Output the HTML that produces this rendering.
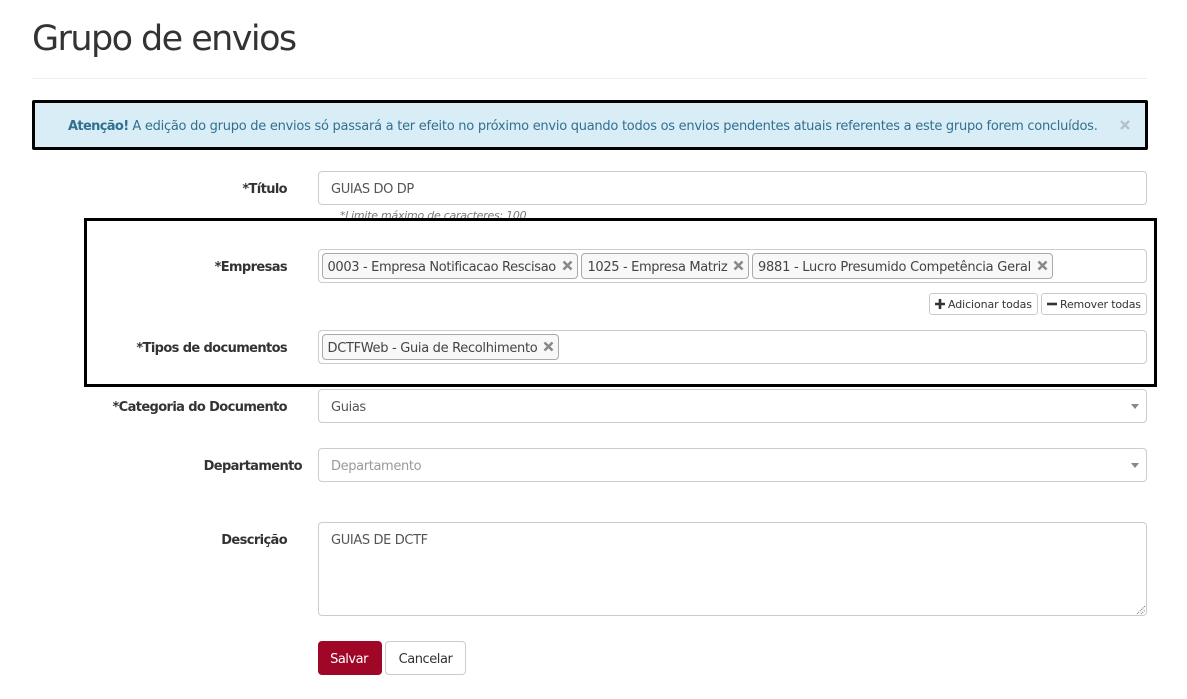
<!DOCTYPE html>
<html lang="pt"><head><meta charset="utf-8"><title>Grupo de envios</title>
<style>
html,body{margin:0;padding:0;background:#fff;width:1187px;height:699px;overflow:hidden}
body{position:relative;font-family:"DejaVu Sans","Liberation Sans",sans-serif;font-size:13px;color:#555}
div,span.a{position:absolute;box-sizing:border-box}
.t{white-space:nowrap;line-height:20px;height:20px}
.box{left:318px;width:829px;height:34px;border:1px solid #ccc;border-radius:4px;background:#fff}
.l{right:900px;font-weight:bold;color:#333;letter-spacing:-.62px;text-align:right}
.v{left:331px;color:#555;letter-spacing:-.37px}
.chip{top:0;height:26px;border:1px solid #aaa;border-radius:4px;background:#f8f8f8}
.c{color:#444;letter-spacing:-.35px}
.btn{height:22px;top:293px;border:1px solid #ccc;border-radius:3px;background:#fff}
.arr{left:1131px;width:0;height:0;border-left:4px solid transparent;border-right:4px solid transparent;border-top:5px solid #888}
svg{position:absolute;display:block}
</style></head><body>
<div class="t" style="left:32px;top:29px;height:20px;line-height:20px;font-size:35px;color:#333;letter-spacing:-1.57px">Grupo de envios</div>
<div style="left:32px;top:78px;width:1115px;height:1px;background:#eee"></div>

<div style="left:32px;top:100px;width:1116px;height:50px;background:#d9edf7;border:3px solid #000;border-radius:2px"></div>
<div class="t" style="left:68px;top:117px;color:#31708f;letter-spacing:-.26px"><b style="letter-spacing:-.65px">Atenção!</b> A edição do grupo de envios só passará a ter efeito no próximo envio quando todos os envios pendentes atuais referentes a este grupo forem concluídos.</div>
<svg style="left:1120px;top:120px" width="10" height="10" viewBox="0 0 10 10"><path d="M1 1L9 9M9 1L1 9" stroke="#b4c2c8" stroke-width="2.4"/></svg>

<div class="t l" style="top:180px">*Título</div>
<div class="box" style="top:171px"></div>
<div class="t v" style="top:180px">GUIAS DO DP</div>
<div class="t" style="left:340px;top:206px;font-size:11px;font-style:italic;color:#777;letter-spacing:-.25px">*Limite máximo de caracteres: 100</div>

<div style="left:84px;top:218px;width:1073px;height:169px;background:#fff;border:3px solid #000"></div>

<div class="t l" style="top:258px">*Empresas</div>
<div class="box" style="top:249px"></div>
<div class="chip" style="left:322px;top:253px;width:256px"></div>
<div class="t c" style="left:327.5px;top:258px">0003 - Empresa Notificacao Rescisao</div>
<svg style="left:562px;top:260px" width="11" height="11" viewBox="0 0 11 11"><path d="M1.5 1.5L9.5 9.5M9.5 1.5L1.5 9.5" stroke="#888" stroke-width="2.5"/></svg>
<div class="chip" style="left:581px;top:253px;width:168px"></div>
<div class="t c" style="left:587.5px;top:258px">1025 - Empresa Matriz</div>
<svg style="left:733px;top:260px" width="11" height="11" viewBox="0 0 11 11"><path d="M1.5 1.5L9.5 9.5M9.5 1.5L1.5 9.5" stroke="#888" stroke-width="2.5"/></svg>
<div class="chip" style="left:752px;top:253px;width:301px"></div>
<div class="t c" style="left:758px;top:258px;letter-spacing:-.25px">9881 - Lucro Presumido Competência Geral</div>
<svg style="left:1037px;top:260px" width="11" height="11" viewBox="0 0 11 11"><path d="M1.5 1.5L9.5 9.5M9.5 1.5L1.5 9.5" stroke="#888" stroke-width="2.5"/></svg>

<div class="btn" style="left:929px;width:109px"></div>
<svg style="left:935px;top:299px" width="10" height="10" viewBox="0 0 10 10"><path d="M5 0V10M0 5H10" stroke="#333" stroke-width="2.6"/></svg>
<div class="t" style="left:948px;top:295px;font-size:11px;color:#333;letter-spacing:-.1px">Adicionar todas</div>
<div class="btn" style="left:1041px;width:106px"></div>
<svg style="left:1047px;top:299px" width="10" height="10" viewBox="0 0 10 10"><path d="M0 5H10" stroke="#333" stroke-width="2.6"/></svg>
<div class="t" style="left:1060px;top:295px;font-size:11px;color:#333;letter-spacing:-.18px">Remover todas</div>

<div class="t l" style="top:339px">*Tipos de documentos</div>
<div class="box" style="top:330px"></div>
<div class="chip" style="left:322px;top:334px;width:237px"></div>
<div class="t c" style="left:327.5px;top:339px;letter-spacing:-.31px">DCTFWeb - Guia de Recolhimento</div>
<svg style="left:543px;top:341px" width="11" height="11" viewBox="0 0 11 11"><path d="M1.5 1.5L9.5 9.5M9.5 1.5L1.5 9.5" stroke="#888" stroke-width="2.5"/></svg>

<div class="t l" style="top:398px">*Categoria do Documento</div>
<div class="box" style="top:389px"></div>
<div class="t v" style="top:398px">Guias</div>
<div class="arr" style="top:404px"></div>

<div class="t l" style="top:457px;right:885px">Departamento</div>
<div class="box" style="top:448px"></div>
<div class="t v" style="top:457px;color:#999">Departamento</div>
<div class="arr" style="top:463px"></div>

<div class="t l" style="top:531px">Descrição</div>
<div class="box" style="top:522px;height:94px"></div>
<div class="t v" style="top:531px">GUIAS DE DCTF</div>
<svg style="left:1136px;top:605px" width="10" height="10" viewBox="0 0 10 10"><path d="M1 9L9 1M5 9L9 5" stroke="#666" stroke-width="1" stroke-dasharray="1 1"/></svg>

<div style="left:318px;top:641px;width:64px;height:34px;background:#a00626;border-radius:4px"></div>
<div class="t" style="left:317px;top:650px;width:64px;text-align:center;color:#fff;letter-spacing:-.5px">Salvar</div>
<div style="left:385px;top:641px;width:81px;height:34px;background:#fff;border:1px solid #ccc;border-radius:4px"></div>
<div class="t" style="left:385px;top:650px;width:81px;text-align:center;color:#333;letter-spacing:-.45px">Cancelar</div>
</body></html>
